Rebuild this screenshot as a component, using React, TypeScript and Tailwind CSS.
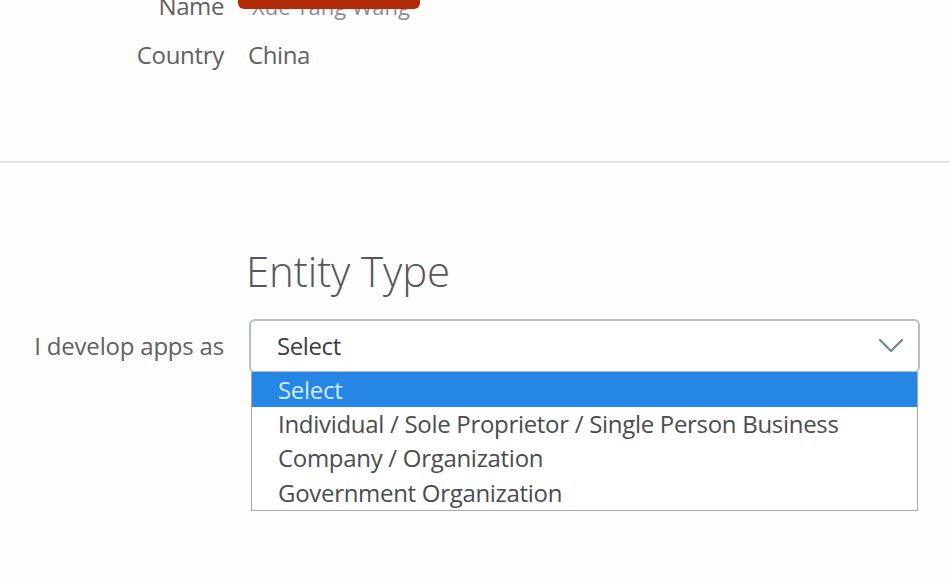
import React from "react";

export default function App() {
  const font = { fontFamily: '"Open Sans", "Noto Sans", sans-serif' };
  return (
    <div className="w-[950px] h-[578px] overflow-hidden bg-[#fdfdfd] text-[#5f6163]" style={font}>
      {/* Personal info */}
      <div className="-mt-[9px] flex flex-col gap-[19px]">
        <div className="flex items-center h-[30px]">
          <div className="w-[224px] text-right text-[24px] tracking-[-0.4px]">Name</div>
          <div className="relative ml-[24px] text-[22px] text-[#8a8c8e]">
            <span className="pl-[4px]">Xue Yang Wang</span>
            <div className="absolute -left-[10px] -top-[20px] w-[182px] h-[39px] rounded-[6px] bg-[#b02a08]" />
          </div>
        </div>
        <div className="flex items-center h-[30px]">
          <div className="w-[224px] text-right text-[24px] tracking-[-0.3px]">Country</div>
          <div className="ml-[24px] text-[24px] tracking-[-0.4px]">China</div>
        </div>
      </div>

      <div className="mt-[91px] h-[2px] bg-[#e6e6e6]" />

      {/* Entity type */}
      <div className="mt-[84px] pl-[246px]">
        <div className="text-[42px] font-light text-[#555759] leading-[48px] tracking-[-0.1px]">Entity Type</div>
      </div>

      <div className="mt-[24px] flex items-start">
        <div className="w-[224px] h-[53px] flex items-center justify-end text-[24px] tracking-[-0.2px]">
          I develop apps as
        </div>
        <div className="ml-[25px] w-[671px] flex flex-col">
          <div className="h-[54px] rounded-[6px] border-2 border-[#b4bec4] bg-white flex items-center justify-between pl-[26px] pr-[14px]">
            <span className="text-[24px] text-[#3a3c3e] tracking-[-0.4px]">Select</span>
            <svg width="26" height="16" viewBox="0 0 26 16" fill="none">
              <path d="M2 2 L13 13 L24 2" stroke="#6f8e9a" strokeWidth="2.4" strokeLinecap="round" strokeLinejoin="round" />
            </svg>
          </div>
          <div className="-mt-[1px] mx-[2px] border border-[#a3a8ab] border-t-0 bg-white text-[24px] tracking-[-0.3px]">
            <div className="h-[35px] bg-[#2686e6] text-[#d3ebff] flex items-center pl-[26px]">Select</div>
            <div className="h-[34px] text-[#4a4c4e] flex items-center pl-[26px]">Individual / Sole Proprietor / Single Person Business</div>
            <div className="h-[34px] text-[#4a4c4e] flex items-center pl-[26px]">Company / Organization</div>
            <div className="h-[35px] text-[#4a4c4e] flex items-center pl-[26px]">Government Organization</div>
          </div>
        </div>
      </div>
    </div>
  );
}
